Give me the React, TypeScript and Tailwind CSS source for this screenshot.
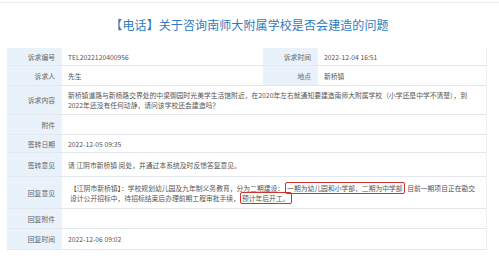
import React from 'react';

const font = { fontFamily: '"Noto Sans CJK SC", "Noto Sans", sans-serif' };

function Label({ children, h }: { children?: React.ReactNode; h: string }) {
  return (
    <div
      className={`${h} flex items-center justify-end pr-[7px] bg-[#e9f1fa] text-[#666] border-b border-[#e3e8ee]`}
    >
      {children}
    </div>
  );
}

function Value({ children, h, span }: { children?: React.ReactNode; h: string; span?: boolean }) {
  return (
    <div
      className={`${h} ${span ? 'col-span-3' : ''} flex items-center pl-[6px] text-[#555] border-b border-[#e3e8ee] whitespace-nowrap`}
    >
      {children}
    </div>
  );
}

export default function App() {
  return (
    <div className="w-[499px] h-[258px] bg-white overflow-hidden" style={font}>
      <div className="pt-[2px]">
        <div className="h-px bg-[#ececec]" />
      </div>
      <div className="h-[45px] flex items-center justify-center pb-[1px]">
        <h1 className="text-[12px] leading-none text-[#2f7cc0] tracking-[0.1px]">
          【电话】关于咨询南师大附属学校是否会建造的问题
        </h1>
      </div>
      <div className="ml-[7px] w-[480px] text-[6.8px] leading-[10px] border-r border-[#eef0f2]">
        <div className="grid grid-cols-[55px_201px_55px_1fr]">
          <Label h="h-[18px]">诉求编号</Label>
          <Value h="h-[18px]">TEL2022120400956</Value>
          <Label h="h-[18px]">诉求时间</Label>
          <Value h="h-[18px]">2022-12-04 16:51</Value>

          <Label h="h-[20px]">诉求人</Label>
          <Value h="h-[20px]">先生</Value>
          <Label h="h-[20px]">地点</Label>
          <Value h="h-[20px]">新桥镇</Value>

          <Label h="h-[29px]">诉求内容</Label>
          <Value h="h-[29px]" span>
            <div>
              新桥镇道路与新杨路交界处的中梁御园时光美学生活馆附近，在2020年左右就通知要建造南师大附属学校（小学还是中学不清楚），到
              <br />
              2022年还没有任何动静，请问该学校还会建造吗？
            </div>
          </Value>

          <Label h="h-[20px]">附件</Label>
          <Value h="h-[20px]" span />

          <Label h="h-[18px]">签转日期</Label>
          <Value h="h-[18px]" span>2022-12-05 09:35</Value>

          <Label h="h-[24px]">签转意见</Label>
          <Value h="h-[24px]" span>请 江阴市新桥镇 阅处，并通过本系统及时反馈答复意见。</Value>

          <Label h="h-[32px]">回复意见</Label>
          <Value h="h-[32px]" span>
            <div className="pl-[2px]">
              【江阴市新桥镇】：学校规划幼儿园及九年制义务教育，分为二期建设：
              <span className="border border-[#d0312d] rounded-[2px] px-[1px] mx-[1px]">一期为幼儿园和小学部，二期为中学部</span>
              {' '}目前一期项目正在勘交
              <br />
              设计公开招标中，待招标结束后办理前期工程审批手续，
              <span className="border border-[#d0312d] rounded-[2px] px-[1px]">预计年后开工。</span>
            </div>
          </Value>

          <Label h="h-[20px]">回复附件</Label>
          <Value h="h-[20px]" span />

          <Label h="h-[21px]">回复时间</Label>
          <Value h="h-[21px]" span>2022-12-06 09:02</Value>
        </div>
      </div>
    </div>
  );
}
